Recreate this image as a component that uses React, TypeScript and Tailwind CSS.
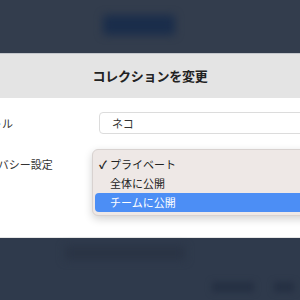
import React from 'react';

const font = { fontFamily: '"Noto Sans CJK JP", "Noto Sans", sans-serif' };

const items = [
  { label: 'プライベート', checked: true, active: false },
  { label: '全体に公開', checked: false, active: false },
  { label: 'チームに公開', checked: false, active: true },
];

const App: React.FC = () => {
  return (
    <div className="w-[300px] h-[300px] overflow-hidden flex flex-col bg-[#2f3a4b]" style={font}>
      {/* backdrop top */}
      <div className="h-[53px] shrink-0 bg-[#333d4d] pt-[15px] pl-[103px]">
        <div className="w-[72px] h-[20px] bg-[#1a2d4b] rounded-[3px] blur-[4px]"></div>
      </div>

      {/* dialog */}
      <div className="shrink-0 border-t border-[#c3c6cb]">
        <div className="h-[44px] bg-[#e4e4e4] flex items-center justify-center">
          <h1 className="text-[13px] font-bold text-[#222] tracking-[-0.2px]">コレクションを変更</h1>
        </div>

        <div className="h-[140px] bg-white border-b border-[#e6e6e6] pt-[14px] overflow-hidden">
          {/* name row */}
          <div className="flex items-center h-[22px]">
            <div className="w-[99px] shrink-0 text-[11px] text-[#333] whitespace-nowrap">
              <span className="ml-[-31px]">タイトル</span>
            </div>
            <div className="flex-1 mr-[-20px] h-[22px] border border-[#dcdcdc] rounded-[4px] flex items-center pl-[12px] text-[11px] text-[#333]">
              ネコ
            </div>
          </div>

          {/* privacy row */}
          <div className="flex items-start mt-[15px]">
            <div className="w-[92px] shrink-0 pt-[7px] text-[11px] text-[#333] whitespace-nowrap">
              <span className="ml-[-35px]">プライバシー設定</span>
            </div>
            <div className="flex-1 mr-[-20px] bg-[#eee8e6] border border-[#d8d2d0] rounded-[6px] shadow-[0_3px_8px_rgba(0,0,0,0.18)] pt-[5px] pb-[3px] pl-[2px]">
              {items.map((it) => (
                <div
                  key={it.label}
                  className={`h-[19px] flex items-center rounded-[4px] text-[11px] ${it.active ? 'bg-[#4c8ef5] text-white' : 'text-[#222]'}`}
                >
                  <span className="w-[15px] pl-[4px] text-[11px] font-bold leading-none">{it.checked ? '✓' : ''}</span>
                  <span>{it.label}</span>
                </div>
              ))}
            </div>
          </div>
        </div>
      </div>

      {/* backdrop bottom */}
      <div className="flex-1 bg-[#2f3a4c] relative">
        <div className="mt-[8px] ml-[65px] w-[120px] h-[14px] bg-[#2a3445] blur-[4px]"></div>
        <div className="flex justify-end gap-[20px] mt-[22px] pr-[6px]">
          <div className="w-[42px] h-[10px] bg-[#253043] blur-[3px]"></div>
          <div className="w-[20px] h-[10px] bg-[#253043] blur-[3px]"></div>
        </div>
      </div>
    </div>
  );
};

export default App;
